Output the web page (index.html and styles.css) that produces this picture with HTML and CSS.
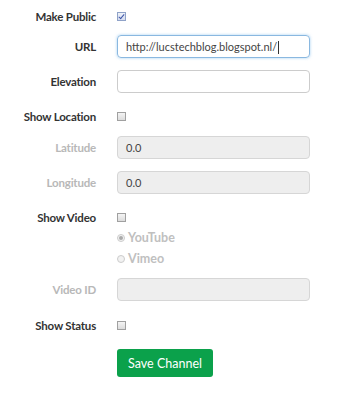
FILE: index.html
```html
<!DOCTYPE html>
<html lang="en">
<head>
  <meta charset="UTF-8" />
  <title>Channel Settings</title>
  <link rel="stylesheet" href="styles.css">
</head>
<body>

  <form class="channel-form">

    <div class="row row-first">
      <label class="row-label">Make Public</label>
      <span class="check checked"></span>
    </div>

    <div class="row row-input">
      <label class="row-label">URL</label>
      <div class="field focused">http://lucstechblog.blogspot.nl/<span class="caret"></span></div>
    </div>

    <div class="row row-input row-next">
      <label class="row-label">Elevation</label>
      <div class="field"></div>
    </div>

    <div class="row row-check">
      <label class="row-label">Show Location</label>
      <span class="check"></span>
    </div>

    <div class="row row-input-near">
      <label class="row-label muted">Latitude</label>
      <div class="field disabled">0.0</div>
    </div>

    <div class="row row-input row-next">
      <label class="row-label muted">Longitude</label>
      <div class="field disabled">0.0</div>
    </div>

    <div class="row row-video">
      <label class="row-label">Show Video</label>
      <span class="check"></span>
    </div>

    <div class="row row-radio">
      <span class="row-label"></span>
      <span class="radio selected"></span><span class="radio-text">YouTube</span>
    </div>

    <div class="row row-radio">
      <span class="row-label"></span>
      <span class="radio"></span><span class="radio-text">Vimeo</span>
    </div>

    <div class="row row-videoid">
      <label class="row-label muted">Video ID</label>
      <div class="field disabled"></div>
    </div>

    <div class="row row-status">
      <label class="row-label">Show Status</label>
      <span class="check"></span>
    </div>

    <div class="row row-button">
      <span class="row-label"></span>
      <button type="button" class="save-btn">Save Channel</button>
    </div>

  </form>

</body>
</html>
```

FILE: styles.css
```css
body {
  margin: 0;
  background: #fff;
  font-family: Lato, "Open Sans", sans-serif;
  color: #333;
}
.channel-form {
  padding-top: 5px;
}
.row {
  display: flex;
  align-items: center;
}
.row-label {
  width: 96px;
  margin-right: 21px;
  text-align: right;
  font-weight: bold;
  font-size: 11.5px;
  letter-spacing: -0.2px;
  flex-shrink: 0;
}
.row-label.muted {
  color: #b8b8b8;
}
.row-first { height: 22px; }
.row-input { height: 23px; margin-top: 8px; }
.row-input.row-next { margin-top: 12px; }
.row-check { height: 22px; margin-top: 12px; }
.row-input-near { height: 23px; margin-top: 9px; }
.row-video { height: 20px; margin-top: 13px; }
.row-radio { height: 21px; }
.row-videoid { height: 23px; margin-top: 9px; }
.row-status { height: 22px; margin-top: 13px; }
.row-button { height: 28px; margin-top: 13px; }

.field {
  width: 193px;
  height: 23px;
  box-sizing: border-box;
  border: 1px solid #ccc;
  border-radius: 4px;
  padding: 0 8px;
  font-size: 11px;
  line-height: 21px;
  color: #444;
}
.field.focused {
  border-color: #8ab8e0;
  box-shadow: 0 0 3px rgba(102,175,233,0.6);
}
.field.disabled {
  background: #eee;
  border-color: #d6d6d6;
}
.caret {
  display: inline-block;
  width: 1px;
  height: 13px;
  background: #333;
  vertical-align: -3px;
  margin-left: 1px;
}

.check {
  width: 9px;
  height: 9px;
  border: 1px solid #a0a0a0;
  background: linear-gradient(#f4f4f4, #dcdcdc);
  box-sizing: border-box;
  position: relative;
}
.check.checked {
  border-color: #8fa2c8;
  background: linear-gradient(#eef2fa, #d5dcef);
}
.check.checked::after {
  content: "";
  position: absolute;
  left: 2px;
  top: 0px;
  width: 2px;
  height: 5px;
  border: solid #3d55a8;
  border-width: 0 1.5px 1.5px 0;
  transform: rotate(40deg);
}

.radio {
  width: 8px;
  height: 8px;
  border-radius: 50%;
  border: 1px solid #ccc;
  background: #f2f2f2;
  box-sizing: border-box;
  margin-right: 3px;
  position: relative;
}
.radio.selected::after {
  content: "";
  position: absolute;
  left: 1px;
  top: 1px;
  width: 4px;
  height: 4px;
  border-radius: 50%;
  background: #aaa;
}
.radio-text {
  font-weight: bold;
  font-size: 12.5px;
  color: #c0c0c0;
}

.save-btn {
  width: 96px;
  height: 28px;
  background: #0ba14b;
  color: #fff;
  border: none;
  border-radius: 3px;
  font-family: Lato, sans-serif;
  font-size: 12.5px;
  padding: 0;
  cursor: pointer;
}
```
